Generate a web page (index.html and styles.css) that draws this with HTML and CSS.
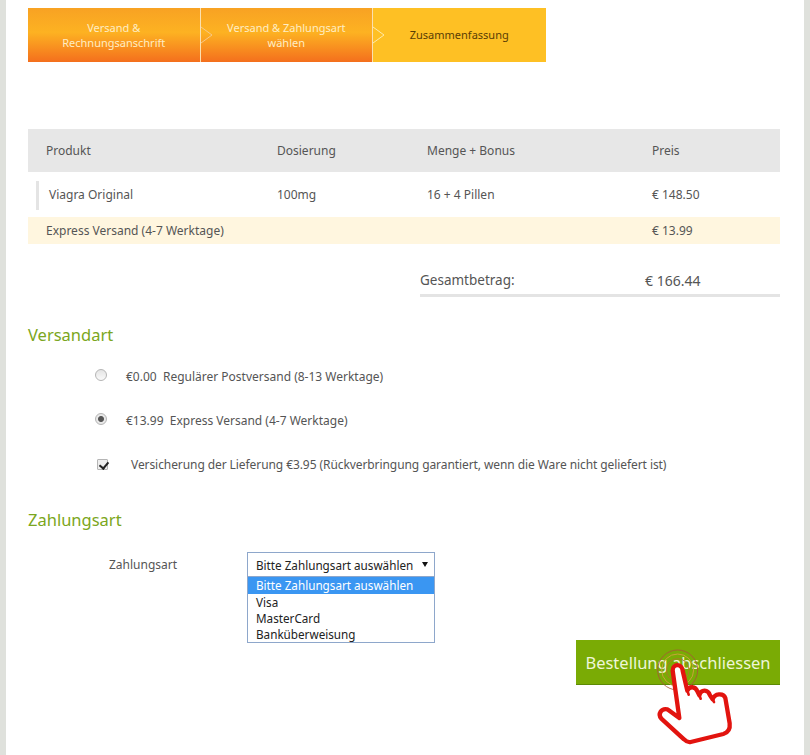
FILE: index.html
```html
<!DOCTYPE html>
<html lang="de">
<head>
<meta charset="utf-8">
<title>Zusammenfassung</title>
<link rel="stylesheet" href="styles.css">
</head>
<body>
<main class="page">
  <nav class="steps">
    <div class="step done">Versand &amp;<br>Rechnungsanschrift</div>
    <div class="step done">Versand &amp; Zahlungsart<br>wählen<svg class="chev" viewBox="0 0 12 54" aria-hidden="true"><path d="M0 19 L11 27 L0 35" fill="none" stroke="#f7c98a" stroke-width="1"/></svg></div>
    <div class="step current">Zusammenfassung<svg class="chev" viewBox="0 0 12 54" aria-hidden="true"><path d="M0 19 L11 27 L0 35" fill="none" stroke="#ffe9a8" stroke-width="1"/></svg></div>
  </nav>

  <section class="order">
    <div class="row head"><span>Produkt</span><span>Dosierung</span><span>Menge + Bonus</span><span>Preis</span></div>
    <div class="row item"><span class="name">Viagra Original</span><span>100mg</span><span>16 + 4 Pillen</span><span>€ 148.50</span></div>
    <div class="row ship"><span>Express Versand (4-7 Werktage)</span><span></span><span></span><span>€ 13.99</span></div>
    <div class="total"><span>Gesamtbetrag:</span><span>€ 166.44</span></div>
  </section>

  <h2 class="title title-ship">Versandart</h2>
  <div class="options">
    <label class="opt"><input type="radio" name="v" class="radio"><span>€0.00&nbsp; Regulärer Postversand (8-13 Werktage)</span></label>
    <label class="opt"><input type="radio" name="v" class="radio" checked><span>€13.99&nbsp; Express Versand (4-7 Werktage)</span></label>
    <label class="opt opt-check"><input type="checkbox" class="check" checked><span>Versicherung der Lieferung €3.95 (Rückverbringung garantiert, wenn die Ware nicht geliefert ist)</span></label>
  </div>

  <h2 class="title title-pay">Zahlungsart</h2>
  <div class="pay">
    <span class="pay-label">Zahlungsart</span>
    <div class="select">
      <div class="select-box"><span>Bitte Zahlungsart auswählen</span><i class="arrow"></i></div>
      <ul class="list">
        <li class="active">Bitte Zahlungsart auswählen</li>
        <li>Visa</li>
        <li>MasterCard</li>
        <li>Banküberweisung</li>
      </ul>
    </div>
  </div>

  <div class="actions"><button class="submit" type="button">Bestellung abschliessen</button></div>

  <svg class="hand" viewBox="0 0 750 375" aria-hidden="true">
    <circle cx="353" cy="120" r="60" fill="none" stroke="#a8543a" stroke-width="2.5"/>
    <circle cx="353" cy="120" r="48" fill="none" stroke="#c9a23a" stroke-width="3"/>
    <circle cx="353" cy="120" r="34" fill="none" stroke="#b5702e" stroke-width="2.5"/>
    <path d="M338 122 C338 100 366 100 368 122 L382 182 C388 168 406 168 412 184 L418 196 C424 176 444 178 450 196 L458 208 C464 190 490 188 496 204 L509 280 C511 298 504 308 490 312 L392 336 C384 338 378 334 372 328 L304 266 C292 252 304 234 322 238 L358 264 Z" fill="#fff" stroke="#e2140f" stroke-width="13" stroke-linejoin="round"/>
    <path d="M382 182 L386 194 M418 196 L422 206 M458 208 L462 216" fill="none" stroke="#e2140f" stroke-width="8" stroke-linecap="round"/>
  </svg>
</main>
</body>
</html>
```
FILE: styles.css
```css
* { box-sizing: border-box; }
html, body { margin: 0; height: 100%; }
body { background: #fff; }
.page {
  position: relative;
  width: 810px;
  height: 755px;
  overflow: hidden;
  padding: 8px 24px 0 22px;
  border-left: 6px solid #dfe1dc;
  border-right: 6px solid #dfe1dc;
  background: #fff;
  font-family: "Noto Sans", "DejaVu Sans", sans-serif;
  font-size: 12px;
  color: #555;
}
.steps { display: flex; width: 518px; height: 54px; }
.step {
  position: relative;
  flex: 0 0 172.5px;
  text-align: center;
  font-size: 11px;
  line-height: 15px;
  padding-top: 12px;
}
.step.done {
  color: #ffedc4;
  background: linear-gradient(#f8a223 0%, #fdb222 45%, #f46f1d 100%);
  border-right: 1px solid #fbe0b0;
}
.step.current { color: #5a3d05; background: #fec024; padding-top: 19px; }
.chev { position: absolute; left: 0; top: 0; width: 12px; height: 54px; }

.order { margin-top: 67px; }
.row { display: grid; grid-template-columns: 231px 150px 225px 1fr; padding-left: 18px; align-items: center; }
.head { height: 43px; background: #e7e7e7; }
.item { height: 45px; }
.name { position: relative; padding-left: 3px; }
.name::before {
  content: "";
  position: absolute;
  left: -10px;
  top: -5px;
  bottom: -7px;
  width: 3px;
  background: #e4e4e4;
}
.ship { height: 27px; background: #fff6df; }
.total {
  display: flex;
  margin: 25px 0 0 392px;
  height: 28px;
  padding-bottom: 3px;
  border-bottom: 3px solid #e4e4e4;
  font-size: 13.5px;
  align-items: center;
}
.total span:first-child { width: 225px; }
.total span:last-child { font-size: 14px; }

.title { margin: 0; font-size: 16.5px; font-weight: 400; line-height: 24px; color: #7ba620; }
.title-ship { margin-top: 26px; }
.options { padding: 19px 0 0 67px; }
.opt { display: flex; align-items: center; gap: 19px; height: 20px; margin-bottom: 24px; }
.opt-check { gap: 23px; padding-left: 2px; letter-spacing: -0.08px; }
.radio, .check { appearance: none; margin: 0; flex: none; display: block; }
.radio {
  width: 12px; height: 12px;
  border-radius: 50%;
  border: 1px solid #b5b5b5;
  background: linear-gradient(#e4e4e4, #fafafa);
  transform: translateY(-1px);
}
.radio:checked { background: radial-gradient(circle, #555 0 2.5px, #e8e8e8 3.5px); }
.check {
  width: 11px; height: 11px;
  border: 1px solid #b5b5b5;
  border-radius: 1px;
  background: #eee;
  position: relative;
}
.check:checked::after {
  content: "";
  position: absolute;
  left: 2.5px; top: 0;
  width: 4px; height: 7px;
  border: solid #222;
  border-width: 0 2px 2px 0;
  transform: rotate(40deg);
}
.title-pay { margin-top: 34px; }
.pay { display: flex; margin: 20px 0 0 81px; align-items: flex-start; }
.pay-label { width: 138px; line-height: 26px; }
.select { width: 188px; color: #222; font-size: 11.7px; }
.select-box {
  display: flex;
  justify-content: space-between;
  align-items: center;
  height: 25px;
  padding: 0 6px 0 8px;
  border: 1px solid #8ea7cb;
  background: #fff;
}
.arrow {
  width: 0; height: 0;
  border-left: 3px solid transparent;
  border-right: 3px solid transparent;
  border-top: 5px solid #111;
}
.list {
  list-style: none;
  margin: 0;
  padding: 0;
  height: 66px;
  border: 1px solid #8ea7cb;
  border-top: 0;
  line-height: 16px;
}
.list li { padding-left: 8px; height: 16px; }
.list .active { background: #3a96f2; color: #fff; height: 17px; }
.actions { display: flex; justify-content: flex-end; margin-top: -3px; }
.submit {
  width: 204px;
  height: 45px;
  border: 0;
  border-bottom: 1px solid #5d8a05;
  padding: 0;
  background: #7aab05;
  color: #eef6d8;
  font: 400 16.5px "Noto Sans", "DejaVu Sans", sans-serif;
}
.hand { position: absolute; left: 554px; top: 630px; width: 250px; height: 125px; }
```
